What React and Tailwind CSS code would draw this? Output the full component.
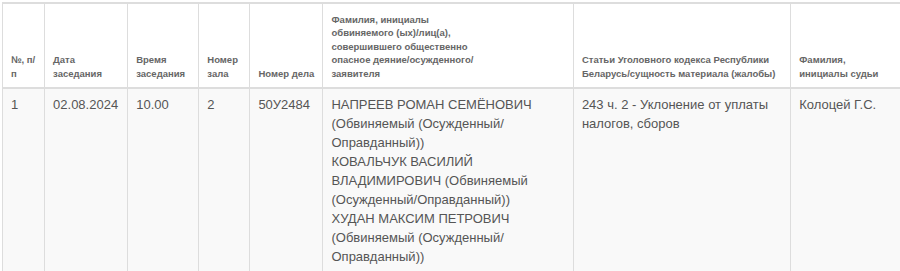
const cols = [42, 83, 71, 51, 73, 250, 217, 130];

const Head = ({ children, last }) => (
  <th
    className={`whitespace-nowrap border-[#dddddd] px-2 pt-2 pb-[7px] text-left align-bottom text-[9.5px] font-bold leading-[13.5px] text-[#666666] ${
      last ? "border-l" : "border-x"
    }`}
  >
    {children}
  </th>
);

const Cell = ({ children, last }) => (
  <td
    className={`whitespace-nowrap border-[#dddddd] px-2 pt-[6px] pb-2 align-top text-[13px] leading-[19px] text-[#555555] ${
      last ? "border-l" : "border-x"
    }`}
  >
    {children}
  </td>
);

export default function App() {
  return (
    <div className="h-[271px] w-[900px] overflow-hidden bg-white pt-[2px] pl-[2px] font-['Liberation_Sans',Arial,sans-serif]">
      <table className="w-[919px] table-fixed border-collapse">
        <colgroup>
          {cols.map((w, i) => (
            <col key={i} style={{ width: w }} />
          ))}
        </colgroup>
        <thead>
          <tr className="h-[85px] border-t-2 border-b-2 border-[#dddddd] bg-white">
            <Head>
              №, п/
              <br />п
            </Head>
            <Head>
              Дата
              <br />
              заседания
            </Head>
            <Head>
              Время
              <br />
              заседания
            </Head>
            <Head>
              Номер
              <br />
              зала
            </Head>
            <Head>Номер дела</Head>
            <Head>
              Фамилия, инициалы
              <br />
              обвиняемого (ых)/лиц(а),
              <br />
              совершившего общественно
              <br />
              опасное деяние/осужденного/
              <br />
              заявителя
            </Head>
            <Head>
              Статьи Уголовного кодекса Республики
              <br />
              Беларусь/сущность материала (жалобы)
            </Head>
            <Head last>
              Фамилия,
              <br />
              инициалы судьи
            </Head>
          </tr>
        </thead>
        <tbody>
          <tr className="bg-[#f9f9f9]">
            <Cell>1</Cell>
            <Cell>02.08.2024</Cell>
            <Cell>10.00</Cell>
            <Cell>2</Cell>
            <Cell>50У2484</Cell>
            <Cell>
              НАПРЕЕВ РОМАН СЕМЁНОВИЧ
              <br />
              (Обвиняемый (Осужденный/
              <br />
              Оправданный))
              <br />
              КОВАЛЬЧУК ВАСИЛИЙ
              <br />
              ВЛАДИМИРОВИЧ (Обвиняемый
              <br />
              (Осужденный/Оправданный))
              <br />
              ХУДАН МАКСИМ ПЕТРОВИЧ
              <br />
              (Обвиняемый (Осужденный/
              <br />
              Оправданный))
            </Cell>
            <Cell>
              243 ч. 2 - Уклонение от уплаты
              <br />
              налогов, сборов
            </Cell>
            <Cell last>Колоцей Г.С.</Cell>
          </tr>
        </tbody>
      </table>
    </div>
  );
}
